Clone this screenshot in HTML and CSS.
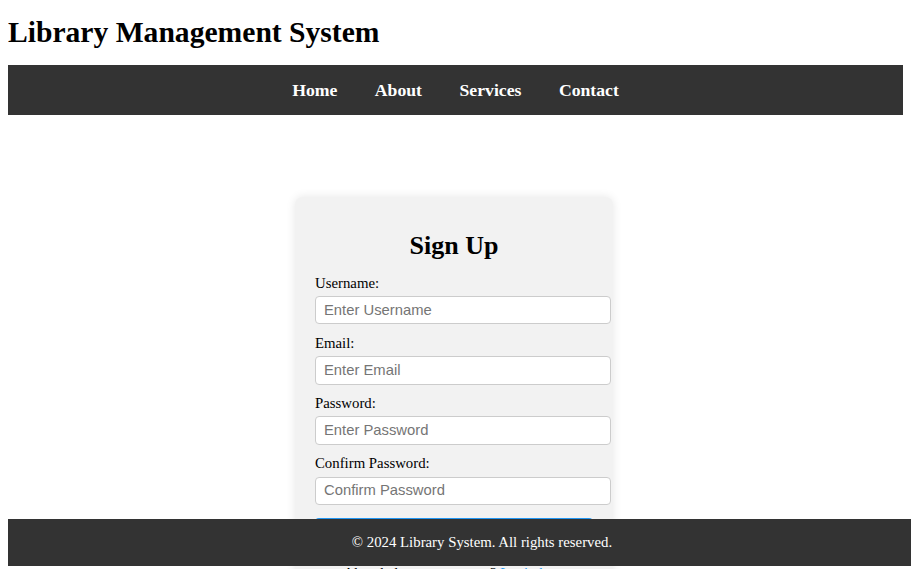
FILE: index.html
```html
<!DOCTYPE html>
<html lang="en">
<head>
<meta charset="utf-8">
<title>Library Management System</title>
<link rel="stylesheet" href="styles.css">
</head>
<body>
<header class="site-header">
  <h1 class="site-title">Library Management System</h1>
</header>
<nav class="main-nav">
  <a href="#" class="nav-link">Home</a>
  <a href="#" class="nav-link">About</a>
  <a href="#" class="nav-link">Services</a>
  <a href="#" class="nav-link">Contact</a>
</nav>
<main class="content">
  <section class="signup-card">
    <h2 class="card-title">Sign Up</h2>
    <form class="signup-form">
      <div class="field">
        <label class="field-label" for="username">Username:</label>
        <input class="field-input" id="username" type="text" placeholder="Enter Username">
      </div>
      <div class="field">
        <label class="field-label" for="email">Email:</label>
        <input class="field-input" id="email" type="email" placeholder="Enter Email">
      </div>
      <div class="field">
        <label class="field-label" for="password">Password:</label>
        <input class="field-input" id="password" type="password" placeholder="Enter Password">
      </div>
      <div class="field">
        <label class="field-label" for="confirm">Confirm Password:</label>
        <input class="field-input" id="confirm" type="password" placeholder="Confirm Password">
      </div>
      <button class="submit-btn" type="submit">Sign Up</button>
    </form>
    <p class="login-note">Already have an account? <a href="#" class="login-link">Login here</a></p>
  </section>
</main>
<footer class="site-footer">
  &copy; 2024 Library System. All rights reserved.
</footer>
</body>
</html>
```
FILE: styles.css
```css
body {
  margin: 0 8px 8px;
  font-family: "Liberation Serif", "Times New Roman", serif;
  color: #000;
  background: #fff;
}

.site-header {
  padding-top: 15px;
}

.site-title {
  font-size: 29.6px;
  line-height: 34px;
  font-weight: bold;
  margin: 0 0 16px;
}

.main-nav {
  background: #333;
  height: 50px;
  display: flex;
  justify-content: center;
  align-items: center;
}

.nav-link {
  color: #fff;
  font-weight: bold;
  font-size: 17.7px;
  text-decoration: none;
  padding: 0 18.75px;
}

.content {
  padding-top: 82px;
  padding-right: 3px;
}

.signup-card {
  width: 278px;
  margin: 0 auto;
  padding: 20px;
  background: #f2f2f2;
  border-radius: 8px;
  box-shadow: 0 0 10px rgba(0, 0, 0, 0.1);
}

.card-title {
  font-size: 26px;
  line-height: 30px;
  font-weight: bold;
  text-align: center;
  margin: 14.3px 0 13.3px;
}

.signup-form {
  display: flex;
  flex-direction: column;
  gap: 10.5px;
}

.field {
  display: flex;
  flex-direction: column;
  gap: 4.2px;
}

.field-label {
  font-size: 14.8px;
  line-height: 17px;
}

.field-input {
  width: 100%;
  height: 17px;
  box-sizing: content-box;
  padding: 4.8px 8px;
  border: 1px solid #ccc;
  border-radius: 4px;
  font-family: "Liberation Sans", Arial, sans-serif;
  font-size: 14.8px;
  line-height: 17px;
  background: #fff;
  margin: 0;
}

.field-input::placeholder {
  color: #757575;
}

.submit-btn {
  margin-top: 2.6px;
  width: 100%;
  padding: 9.5px;
  border: none;
  border-radius: 4px;
  background: #2196f3;
  color: #fff;
  font-family: "Liberation Serif", "Times New Roman", serif;
  font-size: 14.8px;
}

.login-note {
  margin: 11px 0 0;
  font-size: 14.8px;
  text-align: center;
}

.login-link {
  color: #2196f3;
  text-decoration: none;
}

.site-footer {
  position: fixed;
  bottom: 3px;
  width: 100%;
  padding: 14.8px 18.5px;
  background: #333;
  color: #fff;
  text-align: center;
  font-size: 14.8px;
  line-height: 17px;
}
```
